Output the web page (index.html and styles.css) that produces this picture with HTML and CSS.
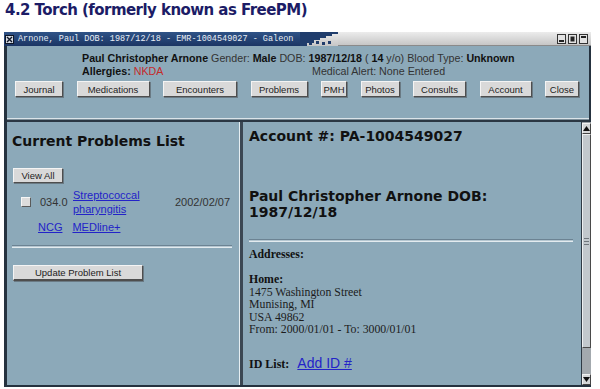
FILE: index.html
```html
<!DOCTYPE html>
<html>
<head>
<meta charset="utf-8">
<title>Torch</title>
<link rel="stylesheet" href="styles.css">
</head>
<body>
<h1 class="page-title">4.2 Torch (formerly known as FreePM)</h1>
<div class="window">
  <div class="titlebar">
    <div class="tb-blue">
      <svg class="tb-close" width="9" height="9" viewBox="0 0 9 9"><rect x="0.5" y="0.5" width="8" height="8" fill="#d6dbe3" stroke="#0e1626"/><path d="M2 2L7 7M7 2L2 7" stroke="#0e1626" stroke-width="1.4"/></svg>
      <span class="tb-text">Arnone, Paul DOB: 1987/12/18 - EMR-1004549027 - Galeon</span>
    </div>
    <svg class="tb-steps" width="38" height="14" viewBox="0 0 38 14"><polygon points="0,0 38,0 38,2 32,2 32,4 26,4 26,6 20,6 20,8 14,8 14,11 7,11 7,14 0,14" fill="#203d6c"/><rect x="9" y="11" width="3" height="2" fill="#203d6c"/><rect x="16" y="9" width="3" height="3" fill="#203d6c"/><rect x="22" y="10" width="3" height="3" fill="#203d6c"/><rect x="28" y="9" width="3" height="3" fill="#203d6c"/></svg>
    <div class="tb-gray">
      <span class="tb-btn"><svg width="9" height="10" viewBox="0 0 9 10"><rect x="0.5" y="0.5" width="8" height="9" fill="#e2e2e2" stroke="#333"/><rect x="2" y="6" width="5" height="2" fill="#222"/></svg></span>
      <span class="tb-btn"><svg width="9" height="10" viewBox="0 0 9 10"><rect x="0.5" y="0.5" width="8" height="9" fill="#e2e2e2" stroke="#333"/><rect x="2.5" y="2.5" width="4" height="5" fill="#222"/></svg></span>
      <span class="tb-btn"><svg width="9" height="10" viewBox="0 0 9 10"><rect x="0.5" y="0.5" width="8" height="9" fill="#e2e2e2" stroke="#333"/><rect x="2" y="2" width="5" height="2" fill="#222"/></svg></span>
    </div>
  </div>
  <div class="client">
    <div class="header">
      <div class="pt-info">
        <div class="pt-line"><b>Paul Christopher Arnone</b> Gender: <b>Male</b> DOB: <b>1987/12/18</b> ( <b>14</b> y/o) Blood Type: <b>Unknown</b></div>
        <div class="pt-line pt-line2">
          <span class="allergy"><b>Allergies:</b> <span class="nkda">NKDA</span></span>
          <span class="alert">Medical Alert: None Entered</span>
        </div>
      </div>
      <div class="toolbar">
        <span class="btn btn-journal">Journal</span>
        <span class="btn btn-meds">Medications</span>
        <span class="btn btn-enc">Encounters</span>
        <span class="btn btn-prob">Problems</span>
        <span class="btn btn-pmh">PMH</span>
        <span class="btn btn-photos">Photos</span>
        <span class="btn btn-consults">Consults</span>
        <span class="btn btn-account">Account</span>
        <span class="btn btn-close">Close</span>
      </div>
    </div>
    <div class="sep"></div>
    <div class="panes">
      <div class="left">
        <h2 class="heading">Current Problems List</h2>
        <span class="btn btn-viewall">View All</span>
        <div class="prob-row">
          <span class="cell-check"><span class="checkbox"></span></span>
          <span class="cell-code">034.0</span>
          <span class="cell-name"><a href="#">Streptococcal<br>pharyngitis</a></span>
          <span class="cell-date">2002/02/07</span>
        </div>
        <div class="ref-row">
          <a href="#">NCG</a>
          <a href="#">MEDline+</a>
        </div>
        <div class="rule rule-left"></div>
        <span class="btn btn-update">Update Problem List</span>
      </div>
      <div class="divider"></div>
      <div class="right">
        <div class="doc">
          <h2 class="heading">Account #: PA-1004549027</h2>
          <h2 class="heading heading-name">Paul Christopher Arnone DOB: 1987/12/18</h2>
          <div class="rule rule-right"></div>
          <div class="addr">
            <b>Addresses:</b><br>
            <br>
            <b>Home:</b><br>
            1475 Washington Street<br>
            Munising, MI<br>
            USA 49862<br>
            From: 2000/01/01 - To: 3000/01/01
          </div>
          <div class="idlist"><b>ID List:</b><a href="#" class="add-id">Add ID #</a></div>
        </div>
        <div class="scrollbar">
          <span class="sb-arrow"><svg width="7" height="5" viewBox="0 0 7 5"><polygon points="3.5,0 7,5 0,5" fill="#111"/></svg></span>
          <span class="sb-thumb"><span class="grip"></span><span class="grip"></span><span class="grip"></span></span>
          <span class="sb-track"></span>
          <span class="sb-arrow"><svg width="7" height="5" viewBox="0 0 7 5"><polygon points="0,0 7,0 3.5,5" fill="#111"/></svg></span>
        </div>
      </div>
    </div>
  </div>
</div>
</body>
</html>
```
FILE: styles.css
```css
* { box-sizing: border-box; }

body {
  margin: 0;
  width: 600px;
  height: 389px;
  overflow: hidden;
  background: #ffffff;
  font-family: "Liberation Sans", Arial, sans-serif;
  color: #2a2a2a;
}

.page-title {
  margin: 0;
  height: 32px;
  padding: 1px 0 0 5px;
  font: bold 15px/18px "DejaVu Sans", Verdana, sans-serif;
  letter-spacing: -0.55px;
  color: #1c1c66;
}

.window {
  margin-left: 4px;
  width: 587px;
  height: 355px;
  display: flex;
  flex-direction: column;
}

/* title bar */
.titlebar {
  height: 14px;
  display: flex;
  flex: none;
}
.tb-blue {
  width: 296px;
  display: flex;
  align-items: center;
  gap: 4px;
  padding-left: 1px;
  background: linear-gradient(#2f5387, #1b3564);
}
.tb-close { flex: none; }
.tb-text {
  font: 8.5px/14px "Liberation Mono", "DejaVu Sans Mono", monospace;
  color: #e8eef6;
  white-space: nowrap;
}
.tb-steps {
  flex: none;
  background: linear-gradient(#ececec, #c6c6c6);
}
.tb-gray {
  flex: 1;
  display: flex;
  justify-content: flex-end;
  align-items: center;
  gap: 2px;
  padding-right: 3px;
  background: linear-gradient(#ececec, #c6c6c6);
  border-bottom: 1px solid #8a8a8a;
}
.tb-btn { display: flex; }

/* client area */
.client {
  flex: 1;
  display: flex;
  flex-direction: column;
  background: #8ca9b9;
  border-left: 3px solid #25323f;
  border-right: 2px solid #25323f;
  border-bottom: 2px solid #25323f;
}

.header {
  height: 72px;
  padding-top: 6px;
  flex: none;
}
.pt-info {
  width: 432px;
  margin: 0 auto;
  font-size: 10.7px;
  line-height: 13px;
  color: #333;
  white-space: nowrap;
}
.pt-info b { color: #111; }
.pt-line2 { display: flex; }
.allergy { width: 230px; }
.nkda { color: #c42a2a; }

.toolbar {
  margin-top: 3px;
  padding: 0 10px 0 8px;
  display: flex;
  justify-content: space-between;
}

.btn {
  display: inline-flex;
  align-items: center;
  justify-content: center;
  height: 16px;
  font-size: 9.5px;
  color: #222;
  background: #d9d9d9;
  border: 1px solid;
  border-color: #f4f4f4 #4e4e4e #4e4e4e #f4f4f4;
  box-shadow: 1px 1px 0 #6a7a84;
  white-space: nowrap;
}
.btn-journal { width: 48px; }
.btn-meds { width: 73px; }
.btn-enc { width: 74px; }
.btn-prob { width: 57px; }
.btn-pmh { width: 26px; }
.btn-photos { width: 39px; }
.btn-consults { width: 53px; }
.btn-account { width: 52px; }
.btn-close { width: 34px; }

.sep {
  height: 4px;
  flex: none;
  border-top: 1px solid #dbe4e9;
  border-bottom: 2px solid #2b3743;
  background: #7d8f9a;
}

.panes {
  flex: 1;
  display: flex;
  min-height: 0;
}

.heading {
  margin: 0;
  font: bold 14px/17px "DejaVu Sans", Verdana, sans-serif;
  color: #111;
}

/* left pane */
.left {
  width: 232px;
  flex: none;
  padding: 11px 0 0 5px;
  display: flex;
  flex-direction: column;
  align-items: flex-start;
}
.btn-viewall {
  margin: 18px 0 0 1px;
  width: 50px;
  height: 15px;
}
.prob-row {
  margin-top: 5px;
  padding-left: 9px;
  display: flex;
  align-items: center;
  font-size: 11px;
  line-height: 14px;
}
.cell-check { width: 19px; display: flex; }
.checkbox {
  width: 10px;
  height: 10px;
  background: #dcdcdc;
  border: 1px solid;
  border-color: #f6f6f6 #5a5a5a #5a5a5a #f6f6f6;
}
.cell-code { width: 33px; color: #333; }
.cell-name { width: 102px; }
.cell-date { color: #333; }

a { color: #2323c8; text-decoration: underline; }

.ref-row {
  margin-top: 4px;
  padding-left: 26px;
  display: flex;
  gap: 10px;
  font-size: 11px;
  line-height: 14px;
}

.rule {
  height: 3px;
  border-top: 1px solid #6c8393;
  background: #b5c7d1;
  border-bottom: 1px solid #e3ebef;
}
.rule-left {
  margin-top: 11px;
  width: 220px;
}
.btn-update {
  margin: 17px 0 0 1px;
  width: 130px;
  height: 16px;
  border-bottom-width: 2px;
}

.divider {
  width: 4px;
  flex: none;
  border-left: 1px solid #e6eef2;
  background: #3b4753;
}

/* right pane */
.right {
  flex: 1;
  display: flex;
  min-width: 0;
}
.doc {
  flex: 1;
  padding: 6px 8px 0 6px;
}
.heading-name {
  margin-top: 43px;
  line-height: 16px;
}
.rule-right {
  margin-top: 19px;
  width: 324px;
}
.addr {
  margin-top: 6px;
  font: 11.8px/12.5px "Liberation Serif", "Times New Roman", serif;
  color: #1c1c1c;
}
.addr b { color: #111; }
.idlist {
  margin-top: 19px;
  display: flex;
  align-items: baseline;
  font: 12px/16px "Liberation Serif", "Times New Roman", serif;
  color: #111;
}
.add-id {
  margin-left: 8px;
  font: 14px/16px "Liberation Sans", Arial, sans-serif;
}

.scrollbar {
  width: 10px;
  flex: none;
  display: flex;
  flex-direction: column;
  padding-top: 1px;
  background: #9aa0a6;
  border-left: 1px solid #2f3a45;
}
.sb-arrow {
  height: 11px;
  flex: none;
  display: flex;
  align-items: center;
  justify-content: center;
  background: #d4d6d8;
  border: 1px solid;
  border-color: #f2f2f2 #444 #444 #f2f2f2;
}
.sb-thumb {
  height: 214px;
  flex: none;
  display: flex;
  flex-direction: column;
  align-items: center;
  justify-content: center;
  gap: 2px;
  background: #c2c8cd;
  border: 1px solid;
  border-color: #eef0f2 #4a4a4a #4a4a4a #eef0f2;
}
.grip {
  width: 5px;
  height: 1px;
  background: #6f767c;
}
.sb-track {
  flex: 1;
  background: #a3a9ae;
}
```
